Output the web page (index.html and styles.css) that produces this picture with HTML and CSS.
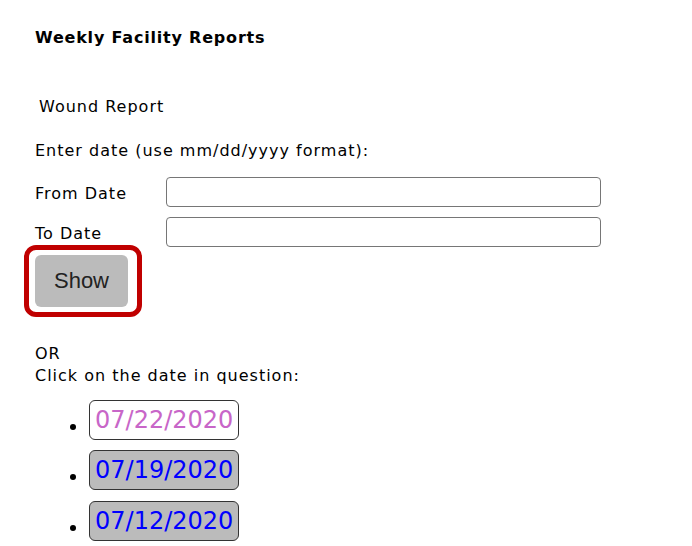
FILE: index.html
```html
<!DOCTYPE html>
<html>
<head>
<meta charset="utf-8">
<title>Weekly Facility Reports</title>
<link rel="stylesheet" href="styles.css">
</head>
<body>
<div class="page">
  <h1 class="title">Weekly Facility Reports</h1>
  <div class="report-name">Wound Report</div>
  <div class="hint">Enter date (use mm/dd/yyyy format):</div>
  <div class="fields">
    <label class="field-row"><span class="field-label">From Date</span><input class="field-input" type="text"></label>
    <label class="field-row"><span class="field-label">To Date</span><input class="field-input" type="text"></label>
  </div>
  <div class="highlight"><button class="show-btn" type="button">Show</button></div>
  <div class="or-text">OR<br>Click on the date in question:</div>
  <ul class="date-list">
    <li><a class="date-link visited" href="#">07/22/2020</a></li>
    <li><a class="date-link" href="#">07/19/2020</a></li>
    <li><a class="date-link" href="#">07/12/2020</a></li>
  </ul>
</div>
</body>
</html>
```
FILE: styles.css
```css
html, body {
  margin: 0;
  padding: 0;
  background: #fff;
}
.page {
  padding: 28px 0 0 35px;
  font-family: "DejaVu Sans", Verdana, sans-serif;
  font-size: 16px;
  letter-spacing: 1px;
  color: #000;
  display: flex;
  flex-direction: column;
  align-items: flex-start;
}
.title {
  margin: 0;
  font-size: 16px;
  font-weight: bold;
  letter-spacing: 0.8px;
  line-height: 20px;
}
.report-name {
  margin-top: 49px;
  padding-left: 4px;
  line-height: 20px;
}
.hint {
  margin-top: 24px;
  line-height: 20px;
}
.fields {
  margin-top: 16px;
  display: flex;
  flex-direction: column;
  gap: 10px;
}
.field-row {
  display: flex;
  align-items: center;
}
.field-label {
  width: 131px;
  line-height: 20px;
  padding-top: 3px;
}
.field-input {
  box-sizing: border-box;
  width: 435px;
  height: 30px;
  border: 1px solid #767676;
  border-radius: 4px;
  background: #fff;
  margin: 0;
  padding: 0 4px;
}
.highlight {
  margin-top: -2px;
  margin-left: -11px;
  border: 5px solid #c00000;
  border-radius: 12px;
  padding: 5px 9px 5px 6px;
}
.show-btn {
  display: block;
  width: 93px;
  height: 52px;
  border: none;
  border-radius: 6px;
  background: #bbbbbb;
  color: #222;
  font-family: "Liberation Sans", Arial, sans-serif;
  font-size: 22px;
  letter-spacing: 0;
  padding: 0;
}
.or-text {
  margin-top: 26px;
  line-height: 22px;
}
.date-list {
  margin: 13px 0 0 0;
  padding-left: 54px;
  list-style: disc;
  display: flex;
  flex-direction: column;
  gap: 10px;
}
.date-list li {
  display: list-item;
}
.date-list li::marker {
  font-size: 20px;
}
.date-link {
  display: inline-block;
  vertical-align: 5px;
  font-size: 24px;
  line-height: 28px;
  letter-spacing: 0;
  padding: 5px 5px;
  border: 1px solid #333;
  border-radius: 6px;
  background: #bbbbbb;
  color: #0000ff;
  text-decoration: none;
}
.date-list li:nth-child(3) .date-link {
  margin-top: 1px;
}
.date-link.visited {
  background: #fff;
  color: #c866c8;
}
```
